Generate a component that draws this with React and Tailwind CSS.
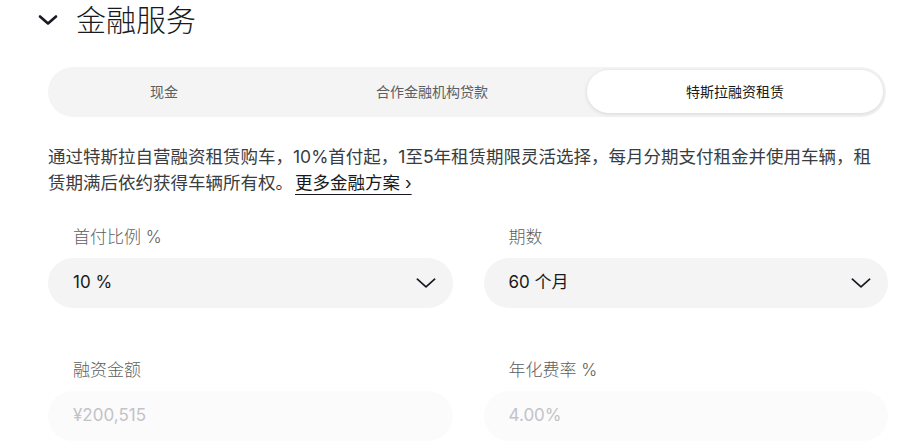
import { useState } from 'react';

const font = { fontFamily: '"Inter", "Noto Sans CJK SC", sans-serif' };

function Chevron({ className = 'w-6 h-6', strokeWidth = 1.6 }) {
  return (
    <svg className={className} viewBox="0 0 24 24" fill="none" stroke="currentColor" strokeWidth={strokeWidth} strokeLinecap="round" strokeLinejoin="round">
      <path d="M4 8.5l8 7 8-7" />
    </svg>
  );
}

function Field({ label, value, disabled }) {
  return (
    <div className="flex flex-col">
      <label className="px-[25px] text-[17px] leading-6 font-light text-[#5c5e62]">{label}</label>
      <div
        className={
          'mt-[9px] h-[50px] rounded-full flex items-center justify-between pl-[25px] pr-[14px] ' +
          (disabled ? 'bg-[#fbfbfc] text-[#c2c3c6]' : 'bg-[#f4f4f4] text-[#171a20]')
        }
      >
        <span className="text-[17px]">{value}</span>
        {!disabled && <Chevron className="w-[26px] h-[26px] text-[#171a20]" strokeWidth={1.6} />}
      </div>
    </div>
  );
}

export default function App() {
  const [tab, setTab] = useState(2);
  const tabs = ['现金', '合作金融机构贷款', '特斯拉融资租赁'];

  return (
    <div className="bg-white min-h-screen w-[904px] h-[447px] overflow-hidden" style={font}>
      <div className="pl-[36px] pr-[16px]">
        {/* header */}
        <div className="h-[40px] flex items-center gap-[16px]">
          <Chevron className="w-[24px] h-[24px] text-[#171a20]" strokeWidth={2.6} />
          <h2 className="text-[30px] leading-[40px] text-[#171a20] font-light">金融服务</h2>
        </div>
      </div>

      <div className="pl-[48px] pr-[16px]">
        {/* tabs */}
        <div className="mt-[27px] w-[838px] h-[50px] rounded-full bg-[#f4f4f4] flex pl-[3px] pr-[3px] pt-[3px] pb-[4px]">
          {tabs.map((t, i) => (
            <button
              key={t}
              onClick={() => setTab(i)}
              className={
                'flex-auto rounded-full text-[14px] ' +
                (tab === i ? 'bg-white text-[#171a20] shadow-[0_1px_4px_rgba(0,0,0,0.12)]' : 'text-[#5c5e62]')
              }
            >
              {t}
            </button>
          ))}
        </div>

        {/* description */}
        <p className="mt-[27px] w-[838px] text-[17.5px] leading-[26px] text-[#393c41]">
          通过特斯拉自营融资租赁购车，10%首付起，1至5年租赁期限灵活选择，每月分期支付租金并使用车辆，租赁期满后依约获得车辆所有权。
          <a href="#" className="ml-[2px] text-[#171a20] underline underline-offset-[5px] decoration-[1px]">更多金融方案 ›</a>
        </p>

        {/* fields */}
        <div className="mt-[29px] w-[840px] grid grid-cols-2 gap-x-[31px] gap-y-[50px]">
          <Field label="首付比例 %" value="10 %" />
          <Field label="期数" value="60 个月" />
          <Field label="融资金额" value="¥200,515" disabled />
          <Field label="年化费率 %" value="4.00%" disabled />
        </div>
      </div>
    </div>
  );
}
